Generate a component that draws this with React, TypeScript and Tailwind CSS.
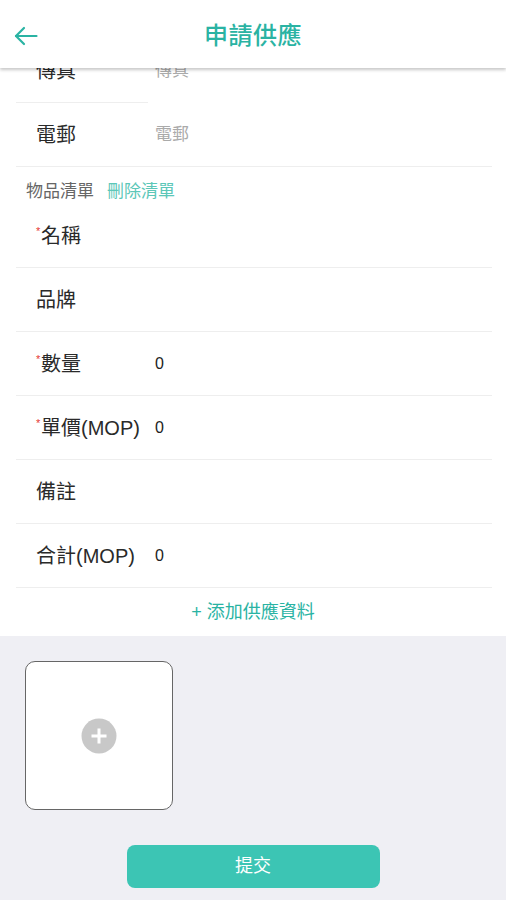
import React from "react";

const font = { fontFamily: '"Liberation Sans", "Noto Sans CJK TC", "Noto Sans", sans-serif' };

function Row({ label, req, value, placeholder }: { label: string; req?: boolean; value?: string; placeholder?: string }) {
  return (
    <div className="ml-4 mr-[14px] h-[64px] border-b border-[#eeeeee] flex items-center pl-5">
      <div className="w-[119px] flex items-center text-[20px] text-[#2a2a2a] whitespace-nowrap">
        {req && <span className="text-[#e53935] text-[11px] w-[5px] -mt-[8px]">*</span>}
        <span>{label}</span>
      </div>
      {value !== undefined && <span className="text-[16px] text-[#222222]">{value}</span>}
      {placeholder && <span className="text-[17px] text-[#aaaaaa]">{placeholder}</span>}
    </div>
  );
}

export default function App() {
  return (
    <div className="w-[506px] h-[900px] bg-[#efeff4] flex flex-col overflow-hidden" style={font}>
      <div className="relative z-10 h-[68px] bg-white flex items-center pt-[3px] shadow-[0_2px_3px_rgba(0,0,0,0.22)] shrink-0">
        <div className="w-[50px] pl-[14px] flex items-center">
          <svg width="24" height="20" viewBox="0 0 24 20" fill="none" stroke="#2ab3a3" strokeWidth="2.2" strokeLinecap="round" strokeLinejoin="round">
            <path d="M22.5 10H2" />
            <path d="M10 2L2 10L10 18" />
          </svg>
        </div>
        <div className="flex-1 text-center text-[24px] font-medium text-[#2ab3a3] tracking-[0.5px] mr-[50px]">申請供應</div>
      </div>
      <div className="bg-white overflow-hidden shrink-0">
        <div className="-mt-[29px] ml-4 w-[132px] h-[64px] border-b border-[#eeeeee] flex items-center pl-5">
          <span className="w-[119px] text-[20px] text-[#2a2a2a] shrink-0">傳真</span>
          <span className="text-[17px] text-[#aaaaaa] shrink-0">傳真</span>
        </div>
        <Row label="電郵" placeholder="電郵" />
        <div className="h-[37px] flex items-end pl-[26px] text-[17px] leading-[24px]">
          <span className="text-[#666666]">物品清單</span>
          <span className="text-[#5cc7b8] ml-[13px]">刪除清單</span>
        </div>
        <Row label="名稱" req />
        <Row label="品牌" />
        <Row label="數量" req value="0" />
        <Row label="單價(MOP)" req value="0" />
        <Row label="備註" />
        <Row label="合計(MOP)" value="0" />
        <div className="h-[48px] flex items-center justify-center text-[18px] text-[#2ab3a3]">+ 添加供應資料</div>
      </div>
      <div className="pl-[25px] pt-[25px]">
        <div className="w-[148px] h-[149px] bg-white border-[1.5px] border-[#666666] rounded-[10px] flex items-center justify-center">
          <svg width="36" height="36" viewBox="0 0 36 36">
            <circle cx="18" cy="18" r="17.5" fill="#c8c8c8" />
            <path d="M18 10.5V25.5M10.5 18H25.5" stroke="white" strokeWidth="3" />
          </svg>
        </div>
      </div>
      <div className="flex justify-center pt-[35px]">
        <div className="w-[253px] h-[43px] bg-[#3cc5b4] rounded-[8px] flex items-center justify-center text-white text-[18px]">提交</div>
      </div>
    </div>
  );
}
